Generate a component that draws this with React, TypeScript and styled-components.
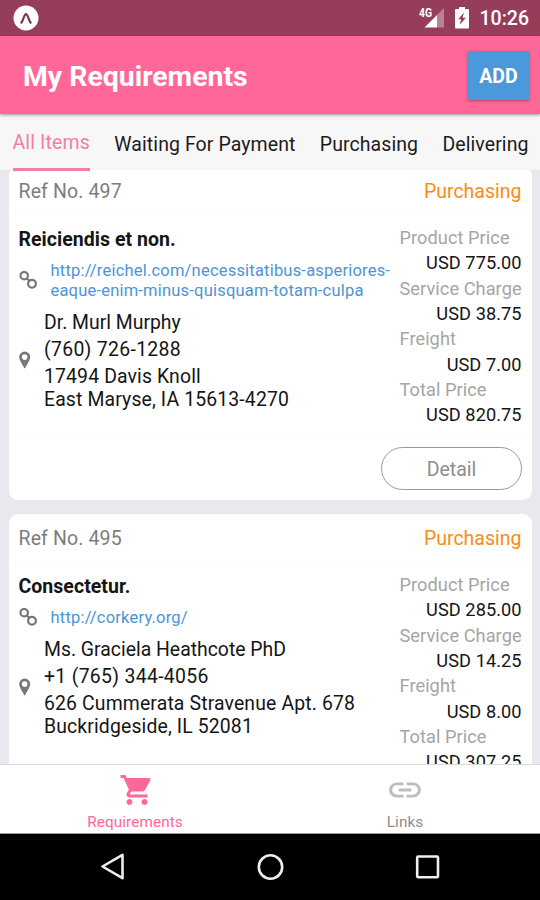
import React from "react";
import styled, { createGlobalStyle } from "styled-components";

const GlobalStyle = createGlobalStyle`
  * { box-sizing: border-box; }
  body { margin: 0; background: #e9e8ee; font-family: Roboto, "Liberation Sans", sans-serif; }
`;

const Screen = styled.div`
  width: 540px;
  height: 900px;
  display: flex;
  flex-direction: column;
  overflow: hidden;
  background: #e9e8ee;
  color: #151515;
`;

const StatusBar = styled.header`
  height: 36px;
  flex: none;
  display: flex;
  align-items: center;
  padding: 0 11px 0 13px;
  background: #963d5b;
  color: #fff;
`;

const StatusIcons = styled.div`
  margin-left: auto;
  display: flex;
  align-items: center;
  gap: 10.5px;
`;

const Clock = styled.span`
  font-size: 19.5px;
  font-weight: 500;
  line-height: 36px;
  padding-top: 2px;
`;

const AppBar = styled.div`
  height: 78px;
  flex: none;
  display: flex;
  align-items: center;
  justify-content: space-between;
  padding: 0 11px 0 23px;
  background: #ff6799;
  box-shadow: 0 1px 3px rgba(0, 0, 0, 0.4);
  z-index: 2;
`;

const Title = styled.h1`
  margin: 0;
  padding-top: 4px;
  font-size: 28.4px;
  font-weight: 700;
  line-height: 40px;
  color: #fff;
`;

const AddButton = styled.button`
  width: 61px;
  height: 49px;
  margin-top: 0;
  padding: 2px 0 0;
  border: 0;
  border-radius: 1px;
  background: #4b98da;
  color: #fff;
  font: 700 19.5px Roboto, sans-serif;
  box-shadow: 0 1px 3px rgba(0, 0, 0, 0.35);
`;

const Tabs = styled.nav`
  height: 56px;
  flex: none;
  display: flex;
  gap: 24.3px;
  padding-left: 12.5px;
  background: #f7f7f7;
  z-index: 1;
`;

const Tab = styled.div<{ $active?: boolean }>`
  flex: none;
  height: 57px;
  padding-top: ${(p) => (p.$active ? 15 : 16.5)}px;
  font-size: 19.5px;
  letter-spacing: ${(p) => (p.$active ? 0.14 : 0.08)}px;
  line-height: 27px;
  color: ${(p) => (p.$active ? "#f47ea4" : "#1c1c1c")};
  border-bottom: 3px solid ${(p) => (p.$active ? "#f47ea4" : "transparent")};
`;

const List = styled.main`
  height: 594px;
  flex: none;
  overflow: hidden;
  padding: 0 8.5px;
`;

const Scroller = styled.div`
  display: flex;
  flex-direction: column;
  gap: 14px;
  margin-top: -3px;
`;

const Card = styled.article`
  height: 333px;
  flex: none;
  border-radius: 9px;
  background: #fff;
  padding: 0 2px;
`;

const CardHead = styled.div`
  height: 48px;
  display: flex;
  justify-content: space-between;
  padding: 1px 8px 0;
  border-bottom: 1px solid #fafafb;
  font-size: 19.5px;
  line-height: 48px;
`;

const RefNo = styled.span`
  letter-spacing: 0.13px;
  color: #7d7d7d;
`;

const Status = styled.span`
  color: #fa8c16;
`;

const CardBody = styled.div`
  height: 224px;
  display: flex;
  padding: 10px 8px 0;
  border-bottom: 1px solid #f8f8f9;
`;

const Info = styled.div`
  width: 381px;
  flex: none;
`;

const ProductName = styled.h2`
  margin: 0;
  padding-top: 1px;
  font-size: 19.5px;
  letter-spacing: 0.04px;
  font-weight: 700;
  line-height: 27px;
  height: 36px;
`;

const IconRow = styled.div<{ $gap: number }>`
  display: flex;
  align-items: center;
  gap: ${(p) => p.$gap}px;
`;

const Url = styled.a`
  flex: 1;
  color: #4b94d8;
  font-size: 16.5px;
  letter-spacing: 0.2px;
  line-height: 20px;
`;

const Contact = styled(IconRow)`
  margin-top: 8px;
`;

const ContactText = styled.div`
  font-size: 19.4px;
  line-height: 27px;
`;

const Phone = styled.div`
  letter-spacing: 0.32px;
`;

const Address = styled.div`
  letter-spacing: 0.14px;
  line-height: 23.5px;
  padding-top: 1.5px;
`;

const Prices = styled.dl`
  flex: 1;
  margin: 0;
  font-size: 18.2px;
  letter-spacing: 0.06px;
  line-height: 25.33px;
  white-space: nowrap;
`;

const PriceLabel = styled.dt`
  color: #a5a5a5;
`;

const PriceValue = styled.dd`
  margin: 0;
  text-align: right;
`;

const CardFoot = styled.div`
  display: flex;
  justify-content: flex-end;
  padding: 8px 8px 0;
`;

const DetailButton = styled.button`
  width: 141px;
  height: 43px;
  padding: 2px 0 0 1px;
  border: 1px solid #999;
  border-radius: 22px;
  background: #fff;
  color: #8e8e8e;
  font: 400 19.5px Roboto, sans-serif;
`;

const BottomTabs = styled.nav`
  height: 70px;
  flex: none;
  display: grid;
  grid-template-columns: 1fr 1fr;
  background: #fff;
  border-top: 1px solid #d9d9d9;
  border-bottom: 1px solid #999;
`;

const BottomTab = styled.div<{ $active?: boolean }>`
  display: flex;
  flex-direction: column;
  align-items: center;
  padding-top: 7px;
  font-size: 15.3px;
  letter-spacing: 0.1px;
  line-height: 20px;
  color: ${(p) => (p.$active ? "#ff6799" : "#8e8e8e")};

  svg {
    margin-bottom: 4px;
    margin-left: ${(p) => (p.$active ? 4 : 0)}px;
  }
`;

const NavBar = styled.footer`
  height: 66px;
  flex: none;
  display: flex;
  justify-content: center;
  align-items: center;
  gap: 128px;
  background: #000;
`;

const ExpoIcon = () => (
  <svg width="26" height="26" viewBox="0 0 26 26">
    <circle cx="13" cy="13" r="12.5" fill="#fff" />
    <path d="M8.4 17.6C10 16 11.200 9.200 13 9.200S16 16 17.600 17.600" fill="none" stroke="#7c3550" strokeWidth="2.2" strokeLinecap="round" />
  </svg>
);

const SignalIcon = () => (
  <svg width="26" height="26" viewBox="0 0 26 26">
    <text x="0" y="12" fill="#fff" fontFamily="Roboto" fontSize="12.5" fontWeight="700" textLength="13" lengthAdjust="spacingAndGlyphs">4G</text>
    <path d="M25 3V22.500H18V10Z" fill="#fff" opacity=".35" />
    <path d="M18 10V22.500H5.500Z" fill="#fff" />
  </svg>
);

const BatteryIcon = () => (
  <svg width="14" height="22" viewBox="0 0 14 22">
    <path d="M4 0H10V2H13Q14 2 14 3V20.5Q14 21.5 13 21.5H1Q0 21.5 0 20.5V3Q0 2 1 2H4Z" fill="#fff" />
    <path d="M9 5.500L3.200 12.200H6.200L4.600 17.800L11 10.800H7.600Z" fill="#963d5b" />
  </svg>
);

const ChainIcon = () => (
  <svg width="18" height="20" viewBox="0 0 18 20" fill="none" stroke="#757575" strokeWidth="2.2">
    <circle cx="5.200" cy="4.700" r="3.700" />
    <circle cx="13" cy="12.700" r="3.900" />
    <path d="M7.600 7.200L10.400 10" />
  </svg>
);

const PinIcon = () => (
  <svg width="12" height="18" viewBox="0 0 12 18">
    <path fillRule="evenodd" d="M5.7 .5A5.5 5.5 0 0 1 11.2 6.1C11.2 8.4 9.700 10.6 6.4 16.7Q5.7 17.7 5 16.7C1.7 10.6 .2 8.4 .2 6.1A5.5 5.5 0 0 1 5.7 .5ZM5.7 3.3A2.8 2.8 0 1 0 5.7 8.9A2.8 2.8 0 1 0 5.7 3.3Z" fill="#777" />
  </svg>
);

const CartIcon = () => (
  <svg width="36" height="36" viewBox="0 0 24 24" fill="#ff6799">
    <path d="M7 18c-1.1 0-1.99.9-1.99 2S5.9 22 7 22s2-.9 2-2-.9-2-2-2zM1 2v2h2l3.6 7.59-1.35 2.45c-.16.28-.25.61-.25.96 0 1.1.9 2 2 2h12v-2H7.42c-.14 0-.25-.11-.25-.25l.03-.12.9-1.63h7.45c.75 0 1.41-.41 1.75-1.03l3.58-6.49A1.003 1.003 0 0 0 20 4H5.21l-.94-2H1zm16 16c-1.1 0-1.99.9-1.99 2s.89 2 1.99 2 2-.9 2-2-.9-2-2-2z" />
  </svg>
);

const LinkIcon = () => (
  <svg width="38" height="36" viewBox="0 0 24 24" fill="#bdbdbd" preserveAspectRatio="none">
    <path d="M3.9 12c0-1.71 1.39-3.1 3.1-3.1h4V7H7c-2.76 0-5 2.24-5 5s2.24 5 5 5h4v-1.9H7c-1.71 0-3.1-1.39-3.1-3.1zM8 13h8v-2H8v2zm9-6h-4v1.9h4c1.71 0 3.1 1.39 3.1 3.1s-1.39 3.1-3.1 3.1h-4V17h4c2.76 0 5-2.24 5-5s-2.24-5-5-5z" />
  </svg>
);

const NavIcon = ({ kind }: { kind: "back" | "home" | "recent" }) => (
  <svg width="29" height="30" viewBox="0 0 29 30" fill="none" stroke="#eee" strokeWidth="2.6" strokeLinejoin="round">
    {kind === "back" && <path d="M3.5 14.5L23.5 2.8V26.2Z" />}
    {kind === "home" && <circle cx="14.5" cy="15" r="11.7" />}
    {kind === "recent" && <rect x="4.2" y="4.5" width="20.8" height="20.8" rx="1" />}
  </svg>
);

interface Order {
  ref: string;
  name: string;
  url: string;
  person: string;
  phone: string;
  address: [string, string];
  prices: [string, string, string, string];
}

const orders: Order[] = [
  {
    ref: "497",
    name: "Reiciendis et non.",
    url: "http://reichel.com/necessitatibus-asperiores-eaque-enim-minus-quisquam-totam-culpa",
    person: "Dr. Murl Murphy",
    phone: "(760) 726-1288",
    address: ["17494 Davis Knoll", "East Maryse, IA 15613-4270"],
    prices: ["775.00", "38.75", "7.00", "820.75"],
  },
  {
    ref: "495",
    name: "Consectetur.",
    url: "http://corkery.org/",
    person: "Ms. Graciela Heathcote PhD",
    phone: "+1 (765) 344-4056",
    address: ["626 Cummerata Stravenue Apt. 678", "Buckridgeside, IL 52081"],
    prices: ["285.00", "14.25", "8.00", "307.25"],
  },
];

const priceLabels = ["Product Price", "Service Charge", "Freight", "Total Price"];

const OrderCard = ({ order }: { order: Order }) => (
  <Card>
    <CardHead>
      <RefNo>Ref No. {order.ref}</RefNo>
      <Status>Purchasing</Status>
    </CardHead>
    <CardBody>
      <Info>
        <ProductName>{order.name}</ProductName>
        <IconRow $gap={14}>
          <ChainIcon />
          <Url>{order.url}</Url>
        </IconRow>
        <Contact $gap={13.5}>
          <PinIcon />
          <ContactText>
            <div>{order.person}</div>
            <Phone>{order.phone}</Phone>
            <Address>
              {order.address[0]}
              <br />
              {order.address[1]}
            </Address>
          </ContactText>
        </Contact>
      </Info>
      <Prices>
        {priceLabels.map((label, i) => (
          <React.Fragment key={label}>
            <PriceLabel>{label}</PriceLabel>
            <PriceValue>USD {order.prices[i]}</PriceValue>
          </React.Fragment>
        ))}
      </Prices>
    </CardBody>
    <CardFoot>
      <DetailButton>Detail</DetailButton>
    </CardFoot>
  </Card>
);

export default function App() {
  return (
    <Screen>
      <GlobalStyle />
      <StatusBar>
        <ExpoIcon />
        <StatusIcons>
          <SignalIcon />
          <BatteryIcon />
          <Clock>10:26</Clock>
        </StatusIcons>
      </StatusBar>
      <AppBar>
        <Title>My Requirements</Title>
        <AddButton>ADD</AddButton>
      </AppBar>
      <Tabs>
        <Tab $active>All Items</Tab>
        <Tab>Waiting For Payment</Tab>
        <Tab>Purchasing</Tab>
        <Tab>Delivering</Tab>
      </Tabs>
      <List>
        <Scroller>
          {orders.map((order) => (
            <OrderCard key={order.ref} order={order} />
          ))}
        </Scroller>
      </List>
      <BottomTabs>
        <BottomTab $active>
          <CartIcon />
          Requirements
        </BottomTab>
        <BottomTab>
          <LinkIcon />
          Links
        </BottomTab>
      </BottomTabs>
      <NavBar>
        <NavIcon kind="back" />
        <NavIcon kind="home" />
        <NavIcon kind="recent" />
      </NavBar>
    </Screen>
  );
}
